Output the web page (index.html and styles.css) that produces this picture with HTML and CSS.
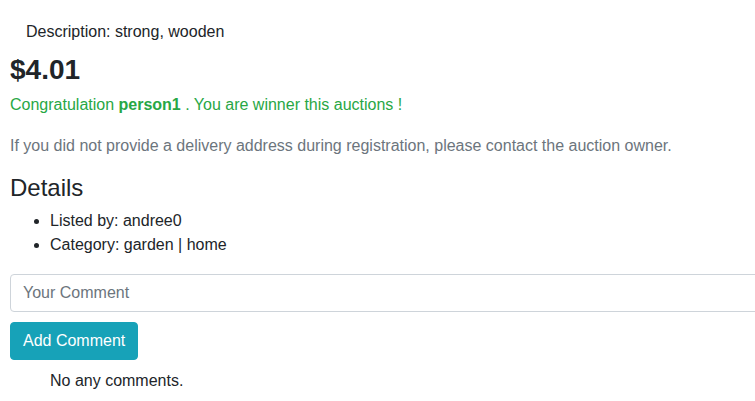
FILE: index.html
```html
<!DOCTYPE html>
<html>
<head>
<meta charset="utf-8">
<link rel="stylesheet" href="styles.css">
</head>
<body>
<div class="page">
  <p class="desc">Description: strong, wooden</p>
  <h3 class="price">$4.01</h3>
  <p class="winner">Congratulation <strong>person1</strong> . You are winner this auctions !</p>
  <p class="note">If you did not provide a delivery address during registration, please contact the auction owner.</p>
  <h4 class="details-title">Details</h4>
  <ul class="details">
    <li>Listed by: andree0</li>
    <li>Category: garden | home</li>
  </ul>
  <form class="comment-form">
    <input class="form-control" type="text" placeholder="Your Comment">
    <button class="btn-info" type="button">Add Comment</button>
  </form>
  <p class="no-comments">No any comments.</p>
</div>
</body>
</html>
```

FILE: styles.css
```css
html, body {
  margin: 0;
  padding: 0;
  overflow: hidden;
  background: #fff;
}
body {
  font-family: "Liberation Sans", Arial, sans-serif;
  font-size: 16px;
  line-height: 1.5;
  color: #212529;
}
.page {
  padding: 20px 0 0 10px;
}
p { margin: 0; }
.desc {
  padding-left: 16px;
  margin-bottom: 9px;
}
.price {
  font-size: 28px;
  font-weight: 700;
  line-height: 1.2;
  margin: 0 0 6px 0;
}
.winner {
  color: #28a745;
  margin-bottom: 17px;
}
.note {
  color: #6c757d;
  margin-bottom: 16px;
}
.details-title {
  font-size: 24px;
  font-weight: 500;
  line-height: 1.2;
  margin: 0 0 7px 0;
}
.details {
  margin: 0 0 17px 0;
  padding-left: 40px;
}
.comment-form {
  display: flex;
  flex-direction: column;
  align-items: flex-start;
  gap: 10px;
  margin: 0;
}
.form-control {
  box-sizing: border-box;
  width: 760px;
  height: 38px;
  padding: 6px 12px;
  font-family: inherit;
  font-size: 16px;
  color: #495057;
  border: 1px solid #ced4da;
  border-radius: 4px;
  background: #fff;
  outline: none;
}
.form-control::placeholder {
  color: #6c757d;
}
.btn-info {
  box-sizing: border-box;
  height: 38px;
  padding: 6px 12px;
  font-family: inherit;
  font-size: 16px;
  line-height: 1.5;
  color: #fff;
  background: #17a2b8;
  border: 1px solid #17a2b8;
  border-radius: 4px;
}
.no-comments {
  margin-top: 9px;
  padding-left: 40px;
}
```
